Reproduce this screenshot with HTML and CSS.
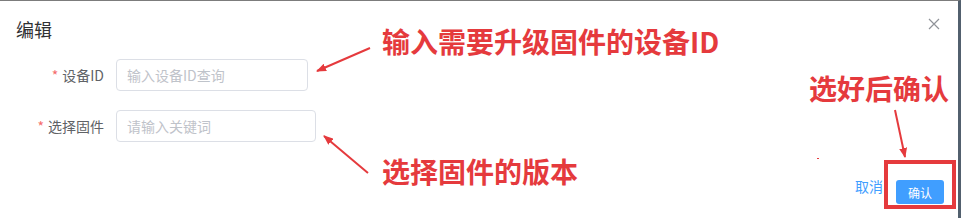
FILE: index.html
```html
<!DOCTYPE html>
<html lang="zh-CN">
<head>
    <meta charset="UTF-8">
    <title>编辑</title>
    <link rel="stylesheet" href="styles.css">
</head>
<body>
    <div class="dialog">
        <div class="dialog-header">
            <span class="dialog-title">编辑</span>
            <svg class="dialog-close" width="12" height="12" viewBox="0 0 12 12">
                <path d="M1 1 L11 11 M11 1 L1 11" stroke="#909399" stroke-width="1.2" fill="none"/>
            </svg>
        </div>

        <form class="dialog-body">
            <div class="form-item">
                <label class="form-label"><span class="required">*</span>设备ID</label>
                <input class="input-field input-device" type="text" placeholder="输入设备ID查询">
            </div>
            <div class="form-item">
                <label class="form-label"><span class="required">*</span>选择固件</label>
                <input class="input-field input-firmware" type="text" placeholder="请输入关键词">
            </div>
        </form>

        <div class="dialog-footer">
            <a class="link-button">取消</a>
            <span class="highlight-box">
                <button type="button" class="button">确认</button>
            </span>
        </div>

        <!-- annotations drawn over the screenshot -->
        <div class="note note-device">输入需要升级固件的设备ID</div>
        <div class="note note-firmware">选择固件的版本</div>
        <div class="note note-confirm">选好后确认</div>
        <span class="dot"></span>

        <svg class="arrows" width="961" height="218" viewBox="0 0 961 218">
            <defs>
                <marker id="head" markerWidth="10" markerHeight="8" refX="9" refY="4" orient="auto" markerUnits="userSpaceOnUse">
                    <path d="M0 0 L10 4 L0 8 Z" fill="#e53a3d"/>
                </marker>
            </defs>
            <line x1="370" y1="48" x2="317" y2="71" stroke="#e53a3d" stroke-width="2" marker-end="url(#head)"/>
            <line x1="368" y1="173" x2="324" y2="136" stroke="#e53a3d" stroke-width="2" marker-end="url(#head)"/>
            <line x1="895" y1="110" x2="905" y2="157" stroke="#e53a3d" stroke-width="2" marker-end="url(#head)"/>
        </svg>
    </div>
</body>
</html>
```

FILE: styles.css
```css
body {
    margin: 0;
    background: #fff;
    font-family: "Noto Sans CJK SC", "Liberation Sans", sans-serif;
}
.dialog {
    position: relative;
    height: 218px;
    box-sizing: border-box;
    border-top: 1px solid #7c7c7c;
    border-right: 3px solid #52606e;
    background: #fff;
    overflow: hidden;
}
.dialog-header {
    display: flex;
    justify-content: space-between;
    align-items: center;
    padding: 15px 16px 0 16px;
    height: 26px;
}
.dialog-title {
    font-size: 18px;
    line-height: 24px;
    color: #303133;
}
.dialog-close {
    margin-top: -10px;
    margin-right: 2px;
}
.dialog-body {
    padding: 17px 0 0 0;
}
.form-item {
    display: flex;
    align-items: center;
    margin-bottom: 19px;
}
.form-item:last-child {
    margin-bottom: 0;
}
.form-label {
    width: 116px;
    box-sizing: border-box;
    padding-right: 12px;
    text-align: right;
    font-size: 14px;
    color: #606266;
}
.required {
    color: #f56c6c;
    margin-right: 4px;
}
.input-field {
    height: 32px;
    box-sizing: border-box;
    padding: 0 10px;
    font-family: inherit;
    font-size: 14px;
    color: #606266;
    border: 1px solid #dcdfe6;
    border-radius: 4px;
    outline: none;
}
.input-field::placeholder {
    color: #bfc3ca;
}
.input-device {
    width: 192px;
}
.input-firmware {
    width: 200px;
}
.dialog-footer {
    display: flex;
    justify-content: flex-end;
    align-items: center;
    padding: 18px 0 0 0;
}
.link-button {
    font-size: 14px;
    color: #409eff;
    margin-right: 1px;
    margin-top: 2px;
}
.highlight-box {
    display: inline-block;
    border: 4px solid #e53a3d;
    padding: 16px 8px 1px 8px;
    margin-right: 2px;
}
.button {
    display: block;
    width: 48px;
    height: 24px;
    padding: 0;
    font-family: inherit;
    font-size: 12px;
    color: #fff;
    background: #409eff;
    border: none;
    border-radius: 3px;
}
.note {
    position: absolute;
    font-size: 28px;
    line-height: 1;
    font-weight: 700;
    color: #e53a3d;
    white-space: nowrap;
}
.note-device {
    left: 382px;
    top: 26px;
}
.note-firmware {
    left: 382px;
    top: 156px;
}
.note-confirm {
    left: 809px;
    top: 73px;
}
.dot {
    position: absolute;
    left: 817px;
    top: 157px;
    width: 2px;
    height: 1px;
    background: #e53a3d;
}
.arrows {
    position: absolute;
    left: 0;
    top: -1px;
    pointer-events: none;
}
```
